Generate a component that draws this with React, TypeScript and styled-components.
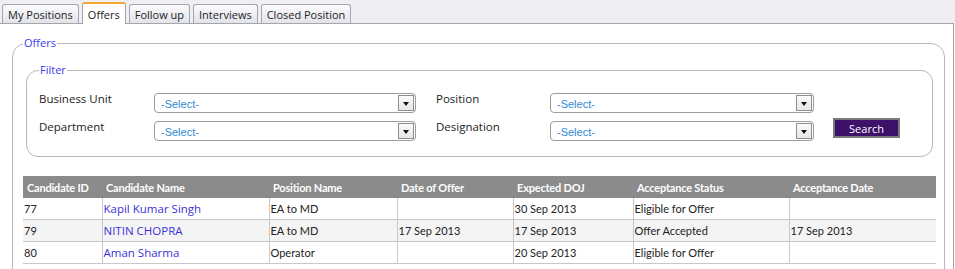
import React from 'react';
import styled, { createGlobalStyle } from 'styled-components';

const GlobalStyle = createGlobalStyle`
	html, body {
		margin: 0;
		padding: 0;
		overflow: hidden;
		background: #ffffff;
	}
	body {
		font-family: "Open Sans", "Liberation Sans", sans-serif;
		color: #222;
	}
`;

const tabs = ['My Positions', 'Offers', 'Follow up', 'Interviews', 'Closed Position'];

const columns = [
	{ title: 'Candidate ID', width: 79 },
	{ title: 'Candidate Name', width: 167 },
	{ title: 'Position Name', width: 128 },
	{ title: 'Date of Offer', width: 116 },
	{ title: 'Expected DOJ', width: 120 },
	{ title: 'Acceptance Status', width: 156 },
	{ title: 'Acceptance Date', width: 147 },
];

const offers = [
	{ id: '77', name: 'Kapil Kumar Singh', position: 'EA to MD', offerDate: '', doj: '30 Sep 2013', status: 'Eligible for Offer', acceptDate: '' },
	{ id: '79', name: 'NITIN CHOPRA', position: 'EA to MD', offerDate: '17 Sep 2013', doj: '17 Sep 2013', status: 'Offer Accepted', acceptDate: '17 Sep 2013' },
	{ id: '80', name: 'Aman Sharma', position: 'Operator', offerDate: '', doj: '20 Sep 2013', status: 'Eligible for Offer', acceptDate: '' },
];

const SelectField = () => (
	<SelectBox>
		<SelectText>-Select-</SelectText>
		<ArrowButton><ArrowDown /></ArrowButton>
	</SelectBox>
);

export default function App() {
	return (
		<>
			<GlobalStyle />
			<Page>
				<TabBar>
					{tabs.map((t) => (
						<Tab key={t} $active={t === 'Offers'}>{t}</Tab>
					))}
				</TabBar>
				<Panel>
					<Group>
						<GroupTitle>Offers</GroupTitle>
						<FilterGroup>
							<GroupTitle>Filter</GroupTitle>
							<FilterGrid>
								<FieldLabel>Business Unit</FieldLabel>
								<SelectField />
								<span />
								<FieldLabel>Position</FieldLabel>
								<SelectField />
								<span />
								<span />

								<FieldLabel>Department</FieldLabel>
								<SelectField />
								<span />
								<FieldLabel>Designation</FieldLabel>
								<SelectField />
								<span />
								<SearchButton type="button">Search</SearchButton>
							</FilterGrid>
						</FilterGroup>

						<Table>
							<colgroup>
								{columns.map((c) => (
									<col key={c.title} style={{ width: c.width }} />
								))}
							</colgroup>
							<thead>
								<tr>
									{columns.map((c) => (
										<Th key={c.title}>{c.title}</Th>
									))}
								</tr>
							</thead>
							<tbody>
								{offers.map((o) => (
									<Row key={o.id}>
										<Td>{o.id}</Td>
										<Td><NameLink href="#">{o.name}</NameLink></Td>
										<Td>{o.position}</Td>
										<Td>{o.offerDate}</Td>
										<Td>{o.doj}</Td>
										<Td>{o.status}</Td>
										<Td>{o.acceptDate}</Td>
									</Row>
								))}
							</tbody>
						</Table>
					</Group>
				</Panel>
			</Page>
		</>
	);
}

const Page = styled.div`
	width: 955px;
`

const TabBar = styled.div`
	height: 23px;
	display: flex;
	align-items: flex-end;
	gap: 3px;
	padding-left: 2px;
	background: #efeff3;
`

const Tab = styled.div<{ $active?: boolean }>`
	box-sizing: border-box;
	height: 19px;
	padding: 0 5px;
	display: flex;
	align-items: center;
	font-size: 11px;
	color: #222;
	border: 1px solid #a3a4b4;
	border-bottom: none;
	border-radius: 3px 3px 0 0;
	background: ${(p) => (p.$active ? '#ffffff' : 'linear-gradient(#fcfcfd, #e2e3eb)')};
	${(p) => p.$active && `
		border-top: 2px solid #f2a533;
		position: relative;
		z-index: 1;
		margin-bottom: -1px;
		height: 22px;
	`}
`

const Panel = styled.div`
	box-sizing: border-box;
	width: 954px;
	border: 1px solid #a6a6a6;
	border-left: none;
	border-bottom: none;
	padding: 11px 8px 0 12px;
`

const Group = styled.fieldset`
	margin: 0;
	min-width: 0;
	padding: 11px 8px 20px 10px;
	border: 1px solid #b8b8b8;
	border-radius: 14px;
`

const GroupTitle = styled.legend`
	padding: 0 1px;
	font-size: 11px;
	line-height: 16px;
	color: #3a3af2;
`

const FilterGroup = styled(Group)`
	margin: 0 3px;
	padding: 15px 12px 15px 12px;
	border-radius: 12px;
`

const FilterGrid = styled.div`
	display: grid;
	grid-template-columns: 115px 262px 20px 114px 264px 19px 67px;
	grid-auto-rows: 20px;
	row-gap: 8px;
`

const FieldLabel = styled.div`
	align-self: start;
	margin-top: -2px;
	font-size: 11.5px;
	line-height: 15px;
	color: #222;
`

const SelectBox = styled.div`
	box-sizing: border-box;
	height: 20px;
	display: flex;
	align-items: center;
	justify-content: space-between;
	padding: 0 1px 0 6px;
	border: 1px solid #9c9c9c;
	border-radius: 4px;
	background: #fff;
`

const SelectText = styled.span`
	font-family: "Liberation Sans", Arial, sans-serif;
	font-size: 11px;
	color: #2f8ad4;
	padding-top: 2px;
`

const ArrowButton = styled.span`
	box-sizing: border-box;
	width: 16px;
	height: 16px;
	display: flex;
	align-items: center;
	justify-content: center;
	padding-top: 2px;
	border: 1px solid #8e8e8e;
	background: linear-gradient(#fbfbfb, #e6e6e6);
`

const ArrowDown = styled.span`
	width: 0;
	height: 0;
	border-left: 3.5px solid transparent;
	border-right: 3.5px solid transparent;
	border-top: 4px solid #111;
`

const SearchButton = styled.button`
	box-sizing: border-box;
	height: 20px;
	margin-top: -3px;
	padding: 0;
	font-family: "Open Sans", sans-serif;
	font-size: 11px;
	color: #fff;
	background: #3d1169;
	border: 2px solid #7a7a7a;
`

const Table = styled.table`
	width: 913px;
	margin-top: 19px;
	border-collapse: collapse;
	table-layout: fixed;
`

const Th = styled.th`
	height: 22px;
	padding: 0 3px 0 4px;
	text-align: left;
	font-family: Lato, sans-serif;
	font-weight: 700;
	font-size: 11px;
	letter-spacing: -0.2px;
	color: #fff;
	background: #8b8b8b;
	white-space: nowrap;
	overflow: hidden;
`

const Row = styled.tr`
	&:nth-child(even) {
		background: #f4f4f4;
	}
`

const Td = styled.td`
	height: 21px;
	padding: 0 1px;
	font-family: Lato, sans-serif;
	font-size: 11px;
	color: #222;
	border-left: 1px solid #c8c8c8;
	border-bottom: 1px solid #c8c8c8;
	white-space: nowrap;
	overflow: hidden;
	&:first-child {
		border-left: none;
	}
`

const NameLink = styled.a`
	font-family: "Open Sans", sans-serif;
	font-size: 11.5px;
	color: #3a32d8;
	text-decoration: none;
`
